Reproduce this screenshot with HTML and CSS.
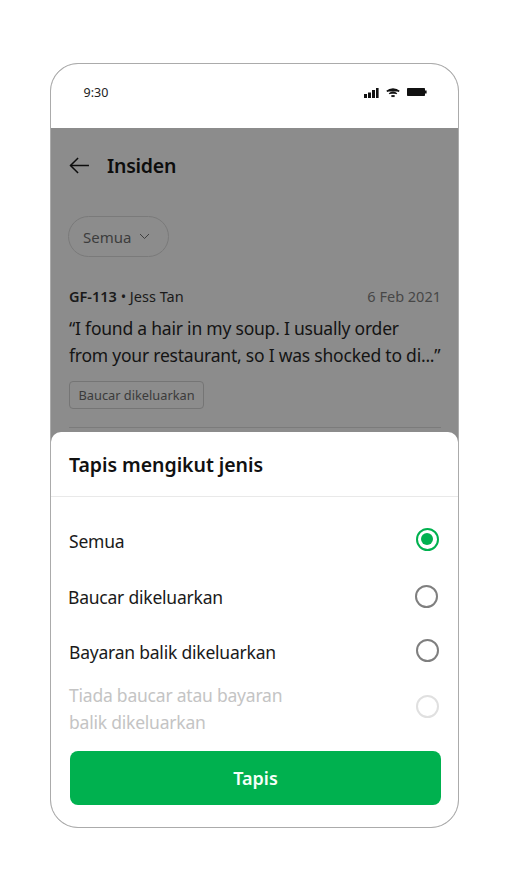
FILE: index.html
```html
<!DOCTYPE html>
<html lang="ms">
<head>
<meta charset="utf-8">
<title>Insiden</title>
<link rel="stylesheet" href="styles.css">
</head>
<body>
<div class="phone">
  <div class="status">
    <span class="time">9:30</span>
    <div class="status-icons">
      <svg width="15" height="10" viewBox="0 0 15 10"><rect x="0" y="6" width="3" height="4"/><rect x="4" y="4.5" width="3" height="5.5"/><rect x="8" y="2" width="3" height="8"/><rect x="12" y="0" width="2.6" height="10"/></svg>
      <svg width="14" height="10" viewBox="0 0 14 10" fill="none" stroke="#111" stroke-width="1.5"><path d="M.8 3.4C4.2.2 9.8.2 13.2 3.4"/><path d="M3.2 5.8c2.2-1.9 5.4-1.9 7.600 0"/><path d="M5.400 8.500c1-.8 2.200-.8 3.200 0" stroke-width="1.800"/></svg>
      <svg width="20" height="8" viewBox="0 0 20 8"><rect x="0" y="0" width="18" height="8" rx=".8"/><rect x="18" y="2.500" width="1.600" height="3"/></svg>
    </div>
  </div>
  <div class="content">
    <header class="nav">
      <svg class="back" width="21" height="17" viewBox="0 0 22 18" fill="none" stroke="#0c0c0c" stroke-width="1.600"><path d="M21 9H1.500"/><path d="M9.500 1 1.500 9l8 8"/></svg>
      <h1>Insiden</h1>
    </header>
    <button class="pill">Semua
      <svg width="11" height="7" viewBox="0 0 11 7" fill="none" stroke="#3f3f3f" stroke-width="1"><path d="M1 1l4.500 4.500L10 1"/></svg>
    </button>
    <div class="meta">
      <span><b>GF-113</b> • Jess Tan</span>
      <span class="date">6 Feb 2021</span>
    </div>
    <p class="quote">“I found a hair in my soup. I usually order<br>from your restaurant, so I was shocked to di...”</p>
    <span class="tag">Baucar dikeluarkan</span>
    <div class="rule"></div>
  </div>
  <section class="sheet">
    <h2>Tapis mengikut jenis</h2>
    <div class="options">
      <div class="opt opt-semua"><span>Semua</span><i class="radio on"></i></div>
      <div class="opt opt-baucar"><span>Baucar dikeluarkan</span><i class="radio"></i></div>
      <div class="opt opt-bayaran"><span>Bayaran balik dikeluarkan</span><i class="radio"></i></div>
      <div class="opt opt-tiada"><span>Tiada baucar atau bayaran<br>balik dikeluarkan</span><i class="radio off"></i></div>
    </div>
    <button class="apply">Tapis</button>
  </section>
</div>
</body>
</html>
```
FILE: styles.css
```css
* { box-sizing: border-box; }
html, body { margin: 0; padding: 0; background: #fff; }
body {
  width: 509px;
  height: 890px;
  padding: 63px 0 0 50px;
  font-family: "Noto Sans", sans-serif;
  color: #111;
  overflow: hidden;
}
.phone {
  position: relative;
  width: 409px;
  height: 765px;
  border: 1.300px solid #ababab;
  border-radius: 28px;
  overflow: hidden;
  background: #8c8c8c;
}
.status {
  height: 64px;
  background: #fff;
  display: flex;
  justify-content: space-between;
  padding: 20px 31.500px 0 32.500px;
}
.time { font-size: 12.500px; line-height: 18px; color: #222; }
.status-icons { display: flex; gap: 7px; align-items: flex-start; padding-top: 4px; }
.status-icons svg { fill: #111; }
.content { padding: 0 17px 0 18px; }
.nav { display: flex; align-items: center; height: 75px; }
.back { display: block; margin-right: 17px; }
h1 { margin: 0; font-size: 19.500px; letter-spacing: -.25px; line-height: 28px; font-weight: 600; color: #0d0d0d; }
.pill {
  display: flex;
  align-items: center;
  gap: 8px;
  width: 101px;
  height: 41px;
  margin-top: 13px;
  margin-left: -1px;
  padding: 0 0 0 14px;
  border: 1px solid #7a7a7a;
  border-radius: 21px;
  background: transparent;
  font: 400 15px "Noto Sans", sans-serif;
  color: #3d3d3d;
}
.meta {
  display: flex;
  justify-content: space-between;
  margin-top: 28px;
  font-size: 14.500px;
  line-height: 22px;
  color: #1a1a1a;
}
.meta b { font-weight: 600; }
.date { color: #474747; }
.quote {
  margin: 8px 0 0;
  font-size: 17.500px;
  line-height: 27px;
  color: #141414;
  letter-spacing: -.22px;
  white-space: nowrap;
}
.tag {
  display: inline-block;
  margin-top: 12px;
  width: 135px;
  height: 28px;
  border: 1px solid #757575;
  border-radius: 4px;
  padding-left: 8.500px;
  font-size: 12.800px;
  line-height: 27px;
  color: #3b3b3b;
  white-space: nowrap;
}
.rule { height: 1px; background: #7b7b7b; margin-top: 18px; }
.sheet {
  position: absolute;
  left: 0;
  right: 0;
  bottom: 0;
  height: 395px;
  background: #fff;
  border-radius: 10px 10px 0 0;
}
h2 {
  margin: 0;
  height: 65px;
  padding: 18px 18px 0;
  font-size: 19.500px;
  letter-spacing: -.05px;
  line-height: 30px;
  font-weight: 600;
  color: #111;
  border-bottom: 1px solid #e9e9e9;
}
.options { padding: 0 19.500px 0 18px; font-size: 17.500px; letter-spacing: -.22px; line-height: 27px; color: #1a1a1a; }
.opt { display: flex; justify-content: space-between; align-items: center; }
.opt-semua { height: 27px; margin-top: 31px; }
.opt-baucar { height: 27px; margin-top: 29px; }
.opt-baucar span { margin-left: -1px; }
.opt-baucar .radio { margin-right: 1px; }
.opt-bayaran { height: 27px; margin-top: 28px; }
.opt-tiada { margin-top: 16px; color: #c4c4c4; }
.radio {
  display: block;
  width: 23px;
  height: 23px;
  border: 2px solid #7f7f7f;
  border-radius: 50%;
  background: #fff;
  margin-top: -3px;
}
.radio.on { border-color: #00b14f; position: relative; margin-top: -5px; }
.radio.on::after {
  content: "";
  position: absolute;
  left: 3.500px;
  top: 3.500px;
  width: 12px;
  height: 12px;
  border-radius: 50%;
  background: #00b14f;
}
.opt-bayaran .radio { margin-top: -4px; }
.radio.off { border-color: #e0e0e0; margin-top: -6px; }
.apply {
  display: block;
  width: 371px;
  height: 54px;
  margin: 15px 0 0 19px;
  border: 0;
  border-radius: 8px;
  background: #00b14f;
  color: #f4fff8;
  font: 600 18px "Noto Sans", sans-serif;
}
```
